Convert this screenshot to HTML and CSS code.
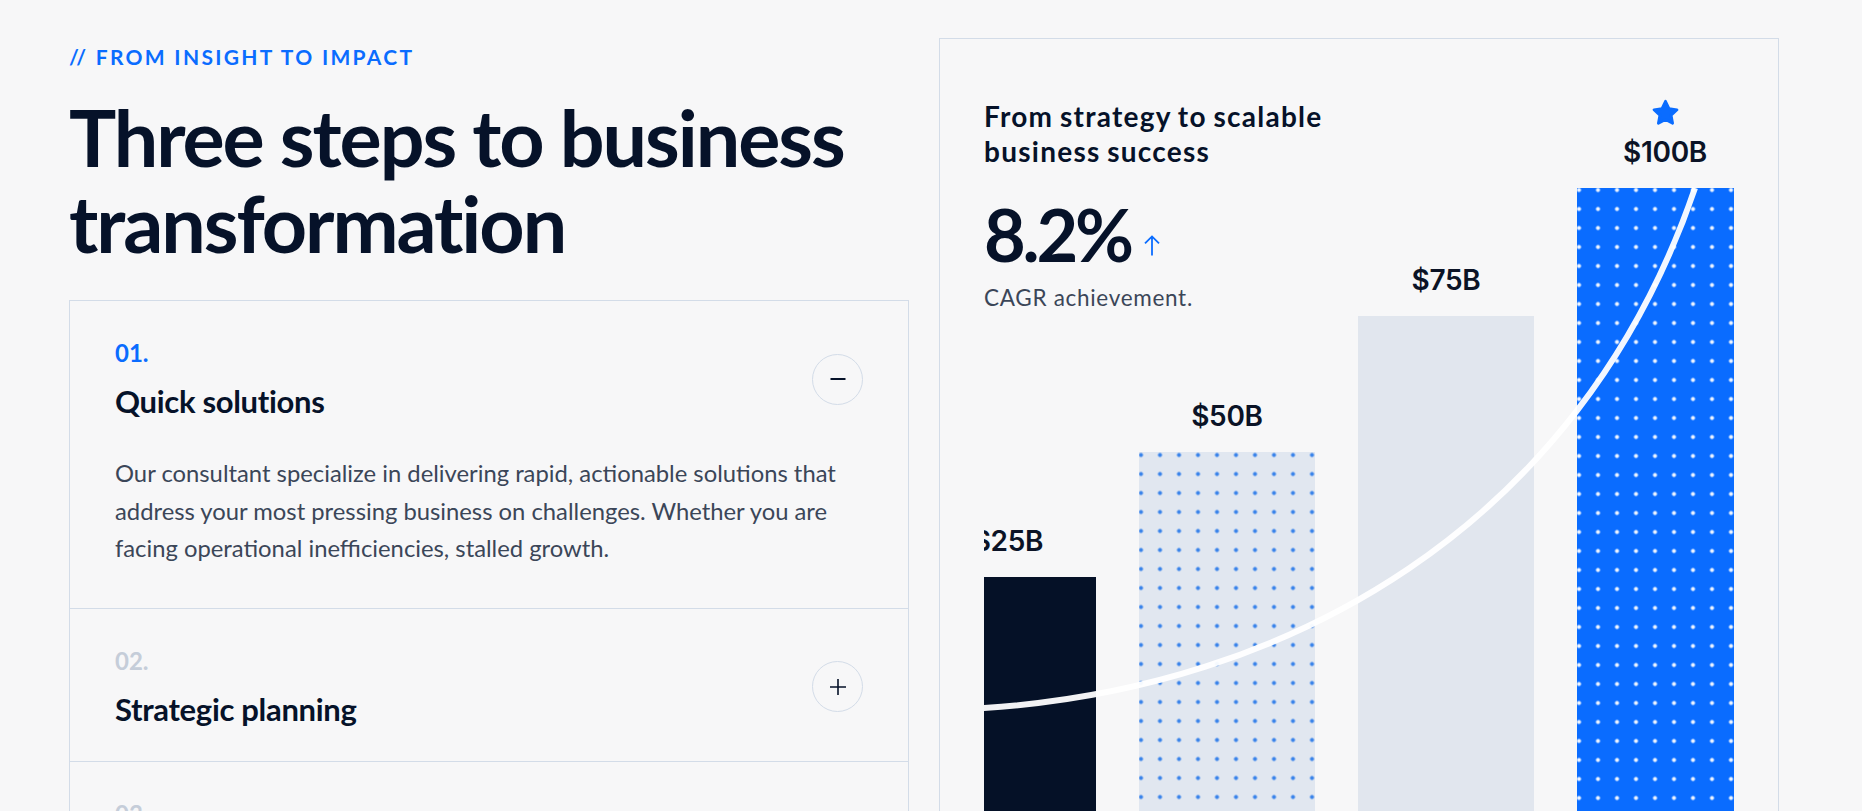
FILE: index.html
```html
<!DOCTYPE html>
<html lang="en">
<head>
<meta charset="utf-8">
<title>Three steps to business transformation</title>
<link rel="stylesheet" href="styles.css">
</head>
<body>
<div class="page">
  <section class="left">
    <p class="eyebrow">// FROM INSIGHT TO IMPACT</p>
    <h2 class="title">Three steps to business transformation</h2>
    <div class="accordion">
      <div class="item open">
        <div class="item-head">
          <div class="item-text">
            <span class="num">01.</span>
            <h3 class="item-title">Quick solutions</h3>
          </div>
          <button class="toggle" aria-label="Collapse">
            <svg width="16" height="16" viewBox="0 0 16 16"><path d="M0.5 8h15" stroke="#061229" stroke-width="2"/></svg>
          </button>
        </div>
        <p class="item-body">Our consultant specialize in delivering rapid, actionable solutions that address your most pressing business on challenges. Whether you are facing operational inefficiencies, stalled growth.</p>
      </div>
      <div class="item">
        <div class="item-head">
          <div class="item-text">
            <span class="num">02.</span>
            <h3 class="item-title">Strategic planning</h3>
          </div>
          <button class="toggle" aria-label="Expand">
            <svg width="18" height="18" viewBox="0 0 18 18"><path d="M1 9h16M9 1v16" stroke="#061229" stroke-width="1.6"/></svg>
          </button>
        </div>
      </div>
      <div class="item">
        <div class="item-head">
          <div class="item-text">
            <span class="num">03.</span>
            <h3 class="item-title">Sustainable growth</h3>
          </div>
          <button class="toggle" aria-label="Expand">
            <svg width="18" height="18" viewBox="0 0 18 18"><path d="M1 9h16M9 1v16" stroke="#061229" stroke-width="1.6"/></svg>
          </button>
        </div>
      </div>
    </div>
  </section>

  <aside class="card">
    <div class="chart">
      <div class="bars">
        <div class="col">
          <span class="val">$25B</span>
          <div class="bar bar-dark" style="--h:303px"></div>
        </div>
        <div class="col">
          <span class="val">$50B</span>
          <div class="bar bar-dots" style="--h:428px"></div>
        </div>
        <div class="col">
          <span class="val">$75B</span>
          <div class="bar bar-plain" style="--h:564px"></div>
        </div>
        <div class="col">
          <svg class="star" viewBox="0 0 24 24"><path d="M12 2.6l2.8 5.9 6.4.9-4.7 4.5 1.2 6.4L12 17.2l-5.7 3.1 1.2-6.4-4.7-4.5 6.4-.9z" fill="#0a6cff" stroke="#0a6cff" stroke-width="2.2" stroke-linejoin="round"/></svg>
          <span class="val">$100B</span>
          <div class="bar bar-blue" style="--h:692px"></div>
        </div>
      </div>
      <svg class="curve" viewBox="0 0 750 781" width="750" height="781"><path d="M-80 614 L0 609 C300 590 595 430 711 89" fill="none" stroke="#ffffff" stroke-width="6" opacity="0.95"/></svg>
    </div>
    <div class="card-text">
      <h3 class="card-title">From strategy to scalable business success</h3>
      <div class="stat">
        <span class="stat-num">8.2%</span>
        <svg class="arrow" width="18" height="21" viewBox="0 0 18 21"><path d="M9 20.5V1.4M2 8.4L9 1.4l7 7" fill="none" stroke="#0a6cff" stroke-width="1.8"/></svg>
      </div>
      <p class="stat-label">CAGR achievement.</p>
    </div>
  </aside>
</div>
</body>
</html>
```

FILE: styles.css
```css
html, body {
  margin: 0;
  height: 100%;
  overflow: hidden;
  background: #f7f7f8;
}

body {
  font-family: Lato, "Noto Sans", sans-serif;
  color: #061229;
}

.page {
  display: flex;
  align-items: flex-start;
  gap: 30px;
  padding: 38px 0 0 69px;
}

.left {
  width: 840px;
  flex-shrink: 0;
  padding-top: 7px;
}

.eyebrow {
  margin: 0;
  font-size: 21px;
  line-height: 24px;
  font-weight: 700;
  letter-spacing: 0.11em;
  color: #0a6cff;
}

.title {
  margin: 25px 0 0;
  font-size: 79px;
  line-height: 86px;
  font-weight: 700;
  letter-spacing: -0.026em;
  color: #061229;
}

.accordion {
  margin-top: 34px;
  border: 1px solid #d3dce8;
}

.item {
  padding: 37px 45px 33px 45px;
}

.item + .item {
  border-top: 1px solid #d3dce8;
}

.item-head {
  display: flex;
  align-items: center;
  justify-content: space-between;
}

.num {
  display: block;
  font-size: 24px;
  line-height: 29px;
  font-weight: 700;
  color: #c5cdd9;
}

.item.open .num {
  color: #0a6cff;
}

.item-title {
  margin: 16px 0 0;
  font-size: 31px;
  line-height: 37px;
  font-weight: 700;
  letter-spacing: -0.01em;
  color: #061229;
}

.toggle {
  box-sizing: border-box;
  width: 51px;
  height: 51px;
  padding: 0;
  border: 1px solid #d3dce8;
  border-radius: 50%;
  background: transparent;
  display: flex;
  align-items: center;
  justify-content: center;
}

.item-body {
  margin: 35px 0 0;
  padding-bottom: 7px;
  max-width: 747px;
  font-size: 23.8px;
  line-height: 37.6px;
  color: #3b4658;
}

/* card */
.card {
  width: 750px;
  flex-shrink: 0;
  border: 1px solid #d3dce8;
  padding: 60px 44px 0;
  display: grid;
  grid-template-columns: 750px;
  grid-template-rows: 781px;
}

.chart,
.card-text {
  grid-area: 1 / 1;
}

.card-text {
  align-self: start;
}

.card-title {
  margin: 0;
  max-width: 400px;
  font-size: 28px;
  line-height: 35px;
  font-weight: 700;
  letter-spacing: 0.045em;
  word-spacing: -0.05em;
  color: #061229;
}

.stat {
  display: flex;
  align-items: flex-end;
  gap: 12px;
  margin-top: 29px;
}

.stat-num {
  font-size: 72px;
  line-height: 72px;
  font-weight: 700;
  letter-spacing: -0.044em;
  color: #061229;
}

.arrow {
  margin-bottom: 14px;
}

.stat-label {
  margin: 13px 0 0;
  font-size: 22.5px;
  line-height: 30px;
  letter-spacing: 0.7px;
  color: #3b4658;
}

.chart {
  position: relative;
  overflow: hidden;
}

.bars {
  display: flex;
  align-items: flex-end;
  gap: 43px;
  height: 100%;
  margin-left: -64px;
}

.col {
  width: 176px;
  flex-shrink: 0;
  display: flex;
  flex-direction: column;
  align-items: center;
}

.val {
  font-family: Inter, "Liberation Sans", sans-serif;
  font-weight: 600;
  font-size: 28px;
  line-height: 34px;
  letter-spacing: -0.01em;
  margin-bottom: 19.2px;
  color: #0b1326;
}

.star {
  width: 31px;
  height: 30px;
  margin-bottom: 7px;
}

.bar {
  width: 100%;
  height: var(--h);
}

.bar-dark {
  background: #051127;
}

.bar-dots {
  background-color: #e1e7f0;
  background-image: radial-gradient(circle, #3a84ea 1.7px, rgba(58, 132, 234, 0) 2.4px);
  background-size: 19px 19px;
  background-position: -7.5px -6.5px;
}

.bar-plain {
  background: #e1e6ee;
}

.bar-blue {
  background-color: #0a6cff;
  background-image: radial-gradient(circle, rgba(255, 255, 255, 0.92) 1.7px, rgba(255, 255, 255, 0) 2.4px);
  background-size: 19px 19px;
  background-position: -7.5px -7.5px;
}

.curve {
  position: absolute;
  left: 0;
  top: 0;
}
```
